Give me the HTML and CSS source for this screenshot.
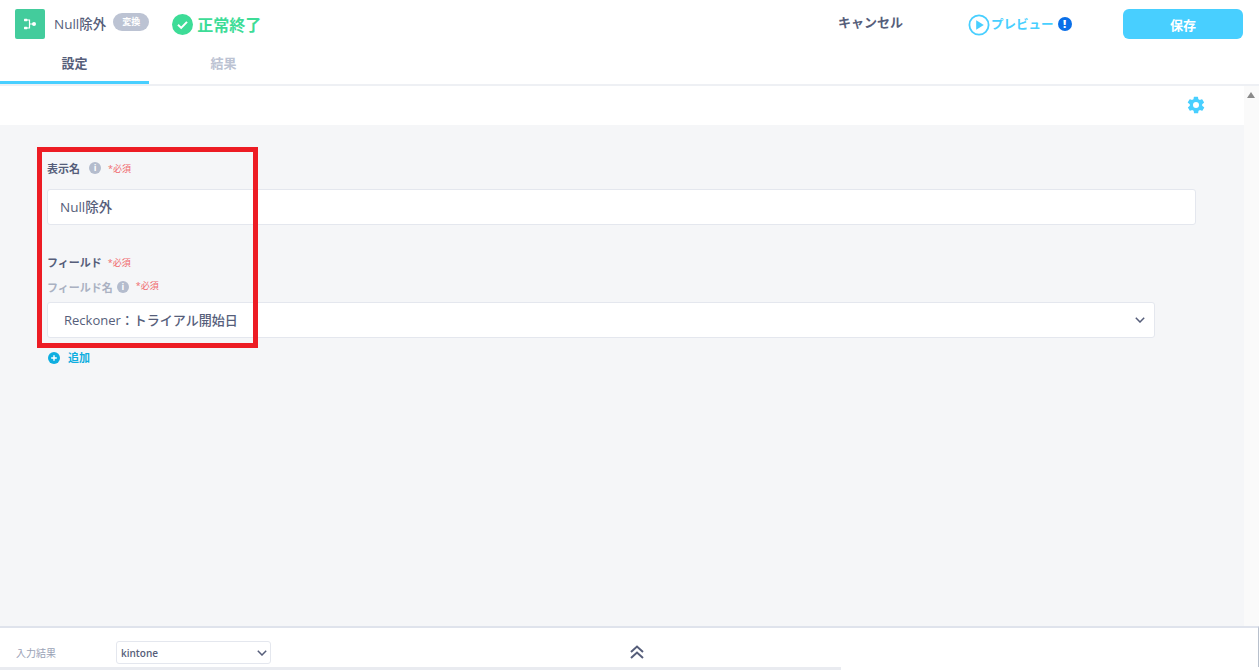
FILE: index.html
```html
<!DOCTYPE html>
<html lang="ja">
<head>
    <meta charset="UTF-8">
    <title>Null除外</title>
    <link rel="stylesheet" href="styles.css">
</head>
<body>
    <div class="page">
        <header class="header">
            <div class="title-row">
                <div class="node-icon">
                    <svg width="14" height="14" viewBox="0 0 14 14"><g fill="none" stroke="#fff" stroke-width="1.2"><path d="M3 3H6.5V11H3M6.5 7H11"/></g><g fill="#fff"><rect x="1" y="1.8" width="3.4" height="2.4" rx=".6"/><rect x="1" y="9.8" width="3.4" height="2.4" rx=".6"/><circle cx="11" cy="7" r="2"/></g></svg>
                </div>
                <span class="node-name">Null除外</span>
                <span class="node-badge">変換</span>
                <svg class="status-icon" width="21" height="21" viewBox="0 0 21 21"><circle cx="10.5" cy="10.5" r="10.5" fill="#3ddc97"/><path d="M6 10.8l3.2 3.1 5.8-6" fill="none" stroke="#fff" stroke-width="2"/></svg>
                <span class="status-text">正常終了</span>
                <div class="actions">
                    <span class="cancel">キャンセル</span>
                    <div class="preview">
                        <svg width="22" height="22" viewBox="0 0 22 22"><circle cx="11" cy="11" r="9.6" fill="none" stroke="#48cfff" stroke-width="1.8"/><path d="M8.2 6.3v9.4l7.6-4.7z" fill="#48cfff"/></svg>
                        <span class="preview-text">プレビュー</span>
                        <span class="preview-alert">!</span>
                    </div>
                    <button class="save" type="button">保存</button>
                </div>
            </div>
            <nav class="tabs">
                <div class="tab tab-active">設定</div>
                <div class="tab">結果</div>
            </nav>
        </header>

        <div class="body-row">
            <main class="content">
                <div class="toolbar">
                    <svg width="20" height="20" viewBox="0 0 24 24"><path fill="#48cfff" d="M19.4 13a7.6 7.6 0 0 0 0-2l2.1-1.6a.5.5 0 0 0 .1-.7l-2-3.4a.5.5 0 0 0-.6-.2l-2.5 1a7.4 7.4 0 0 0-1.7-1l-.4-2.7a.5.5 0 0 0-.5-.4h-4a.5.5 0 0 0-.5.4l-.4 2.7a7.4 7.4 0 0 0-1.7 1l-2.5-1a.5.5 0 0 0-.6.2l-2 3.4a.5.5 0 0 0 .1.7L4.6 11a7.6 7.6 0 0 0 0 2l-2.1 1.6a.5.5 0 0 0-.1.7l2 3.4c.1.2.4.3.6.2l2.5-1c.5.4 1.1.7 1.7 1l.4 2.7c0 .2.2.4.5.4h4c.3 0 .5-.2.5-.4l.4-2.7c.6-.3 1.2-.6 1.7-1l2.5 1c.2.1.5 0 .6-.2l2-3.4a.5.5 0 0 0-.1-.7zM12 15.6a3.6 3.6 0 1 1 0-7.2 3.6 3.6 0 0 1 0 7.2z"/></svg>
                </div>
                <form class="form">
                    <div class="label-row">
                        <span class="label">表示名</span>
                        <span class="info">i</span>
                        <span class="required">*必須</span>
                    </div>
                    <div class="text-box">Null除外</div>

                    <div class="label-row field-heading">
                        <span class="label">フィールド</span>
                        <span class="required">*必須</span>
                    </div>
                    <div class="label-row sub-heading">
                        <span class="label label-muted">フィールド名</span>
                        <span class="info">i</span>
                        <span class="required required-up">*必須</span>
                    </div>
                    <div class="select-box">
                        <span>Reckoner：トライアル開始日</span>
                        <svg width="10" height="6" viewBox="0 0 10 6"><path d="M.8.8L5 5l4.2-4.2" fill="none" stroke="#565e7a" stroke-width="1.5"/></svg>
                    </div>
                    <div class="add-row">
                        <svg width="12" height="12" viewBox="0 0 12 12"><circle cx="6" cy="6" r="6" fill="#0eaee0"/><path d="M6 3.2v5.6M3.2 6h5.6" stroke="#fff" stroke-width="1.4"/></svg>
                        <span>追加</span>
                    </div>
                </form>
            </main>
            <aside class="scrollbar"><span class="scroll-up"></span></aside>
        </div>

        <footer class="footer">
            <span class="footer-label">入力結果</span>
            <div class="footer-select">
                <span>kintone</span>
                <svg width="10" height="6" viewBox="0 0 10 6"><path d="M.8.8L5 5l4.2-4.2" fill="none" stroke="#565e7a" stroke-width="1.5"/></svg>
            </div>
            <svg class="expand" width="14" height="14" viewBox="0 0 14 14"><path d="M1 7l6-5.5L13 7M1 13l6-5.5L13 13" fill="none" stroke="#565e7a" stroke-width="2"/></svg>
        </footer>
        <div class="hscroll"><div class="hscroll-thumb"></div></div>

        <div class="highlight"></div>
    </div>
</body>
</html>
```

FILE: styles.css
```css
* { box-sizing: border-box; }
html, body { margin: 0; height: 100%; overflow: hidden; }
body { font-family: "Open Sans", "Noto Sans CJK JP", sans-serif; color: #565e7a; background: #fff; }
.page { position: relative; width: 1259px; height: 670px; display: flex; flex-direction: column; }

/* header */
.header { height: 86px; flex: none; border-bottom: 2px solid #eef0f4; }
.title-row { height: 50px; padding: 9px 16px 0 15px; display: flex; align-items: flex-start; }
.node-icon { width: 30px; height: 30px; border-radius: 2px; background: #43cc9c; display: flex; align-items: center; justify-content: center; }
.node-name { margin-left: 9px; margin-top: 4px; font-size: 13.5px; line-height: 22px; font-weight: 500; }
.node-badge { margin-left: 7px; margin-top: 4px; width: 36px; height: 18px; border-radius: 9px; background: #bcc3d3; color: #fff; font-size: 9px; font-weight: 700; line-height: 17px; text-align: center; }
.status-icon { margin-left: 23px; margin-top: 5px; }
.status-text { margin-left: 4px; margin-top: 4px; font-size: 16px; line-height: 24px; font-weight: 700; color: #3ddc97; }
.actions { margin-left: auto; display: flex; align-items: flex-start; }
.cancel { margin-top: 2px; font-size: 13px; line-height: 22px; font-weight: 700; }
.preview { margin-left: 65px; margin-top: 5px; display: flex; align-items: center; height: 22px; width: 105px; }
.preview-text { margin-left: 1px; margin-bottom: 3px; font-size: 12.5px; font-weight: 700; color: #48cfff; }
.preview-alert { margin-left: 4px; margin-bottom: 2px; width: 14px; height: 14px; border-radius: 50%; background: #0a6fe8; color: #fff; font-size: 11px; font-weight: 800; line-height: 14px; text-align: center; }
.save { margin-left: 50px; width: 120px; height: 30px; border: none; border-radius: 6px; background: #48cfff; color: #fff; font-family: inherit; font-size: 13px; font-weight: 700; padding: 0; }
.tabs { height: 34px; display: flex; }
.tab { width: 149px; height: 34px; font-size: 13px; font-weight: 700; color: #bcc3d3; text-align: center; line-height: 26px; }
.tab-active { color: #565e7a; border-bottom: 3px solid #48cfff; }

/* main area */
.body-row { flex: 1; display: flex; min-height: 0; }
.content { flex: 1; display: flex; flex-direction: column; }
.toolbar { height: 39px; flex: none; padding: 9px 38px 0 0; display: flex; justify-content: flex-end; align-items: flex-start; }
.form { flex: 1; background: #f5f6f8; padding: 33px 48px 0 47px; }
.label-row { display: flex; align-items: center; height: 20px; }
.label { font-size: 11px; font-weight: 700; }
.label-muted { color: #aab1c2; }
.info { margin-left: 9px; width: 12px; height: 12px; border-radius: 50%; background: #b4bccd; color: #fff; font-size: 9px; font-weight: 700; line-height: 12px; text-align: center; }
.required { margin-left: 7px; font-size: 9px; color: #f0686c; }
.required-up { margin-top: -4px; }
.text-box { margin-top: 11px; height: 36px; border: 1px solid #e4e7ee; border-radius: 3px; background: #fff; padding-left: 12px; font-size: 13.5px; line-height: 34px; font-weight: 500; }
.field-heading { margin-top: 27px; }
.field-heading .required { margin-left: 6px; }
.sub-heading { margin-top: 5px; }
.sub-heading .info { margin-left: 4px; }
.select-box { margin-top: 5px; width: 1108px; height: 36px; border: 1px solid #e4e7ee; border-radius: 3px; background: #fff; padding: 0 9px 0 16px; display: flex; align-items: center; justify-content: space-between; font-size: 13px; line-height: 32px; font-weight: 500; }
.add-row { margin-top: 13px; margin-left: 1px; display: flex; align-items: center; gap: 8px; font-size: 11px; line-height: 14px; font-weight: 700; color: #0eaee0; }
.scrollbar { width: 15px; flex: none; background: #fafafa; padding: 6px 0 0 3px; }
.scroll-up { display: block; width: 0; height: 0; border-left: 4px solid transparent; border-right: 4px solid transparent; border-bottom: 6px solid #8a8a8a; }

/* footer */
.footer { height: 41px; flex: none; border-top: 2px solid #dfe3ec; border-right: 1px solid #b8c0cc; background: #fff; padding: 10px 0 0 16px; display: flex; align-items: center; }
.footer-label { width: 100px; font-size: 10px; color: #9aa2b6; }
.footer-select { width: 155px; height: 23px; border: 1px solid #e4e7ee; border-radius: 3px; padding: 0 3px 0 4px; display: flex; align-items: center; justify-content: space-between; font-size: 10px; font-weight: 600; }
.expand { margin-left: 359px; margin-bottom: 2px; }
.hscroll { height: 3px; flex: none; background: #fff; }
.hscroll-thumb { width: 841px; height: 3px; background: #e9ebf0; }

/* red annotation drawn over the form */
.highlight { position: absolute; left: 37px; top: 147px; width: 221px; height: 201px; border: 5px solid #ed1c24; }
```
